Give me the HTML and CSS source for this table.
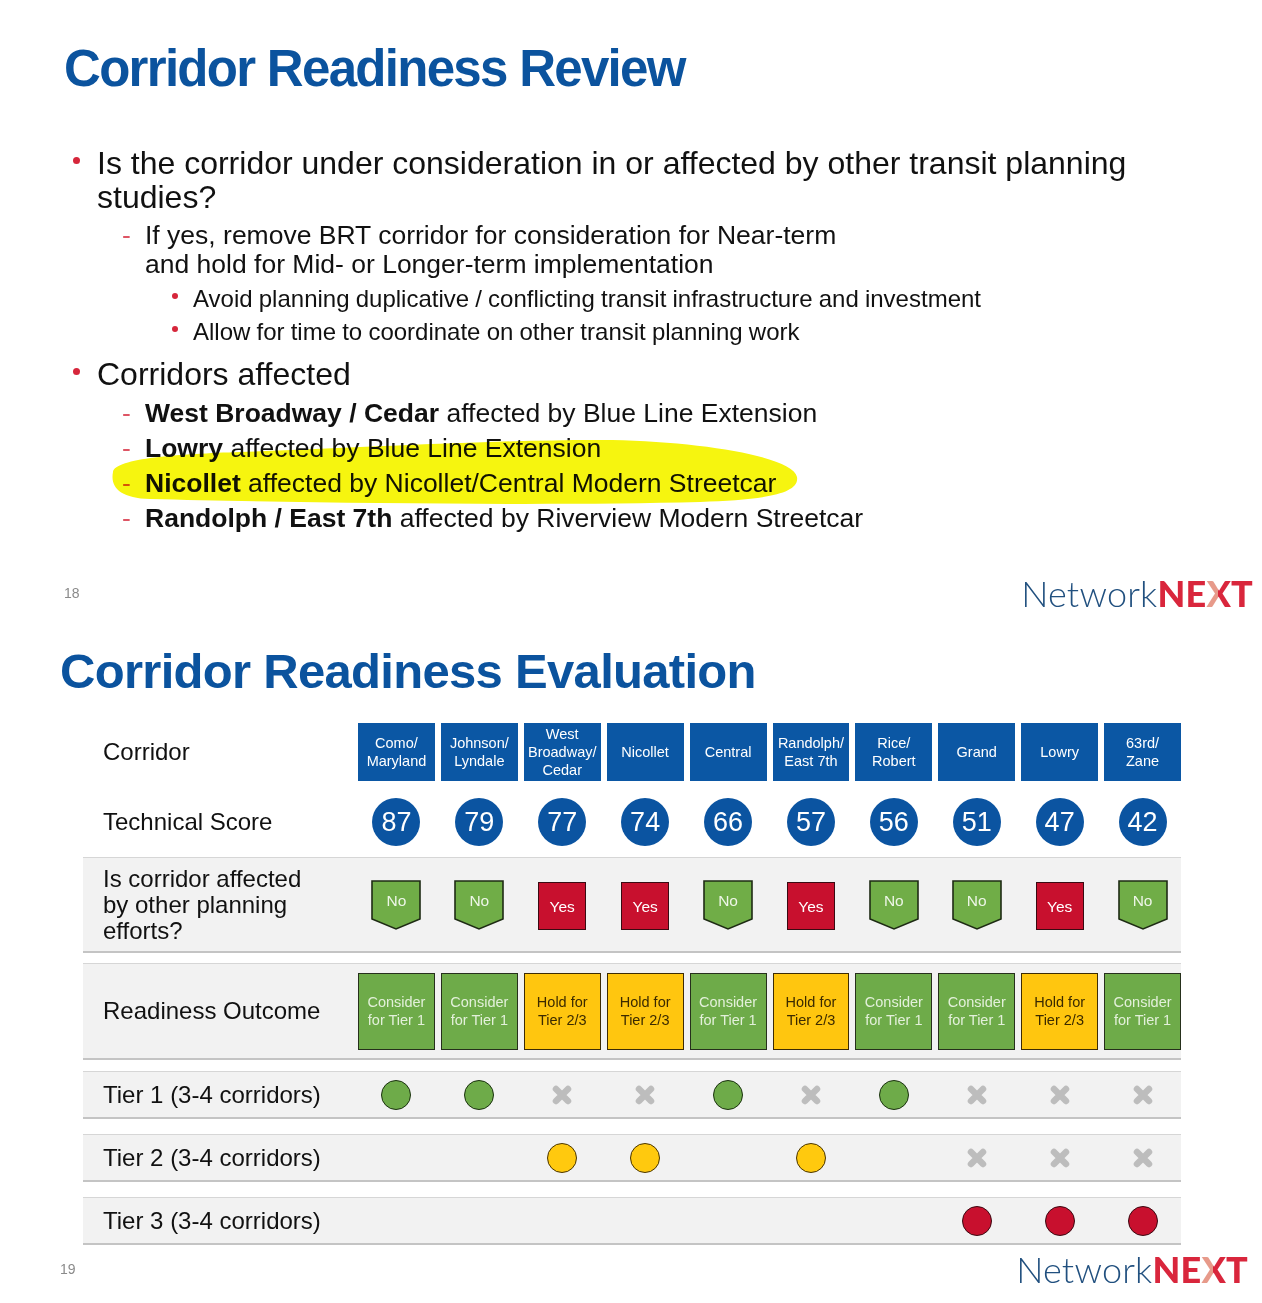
FILE: index.html
```html
<!DOCTYPE html>
<html lang="en">
<head>
<meta charset="utf-8">
<title>Corridor Readiness</title>
<link rel="stylesheet" href="styles.css">
</head>
<body>
<section class="slide slide-review">
  <h1 class="title title-review">Corridor Readiness Review</h1>
  <div class="points">
    <div class="p1">Is the corridor under consideration in or affected by other transit planning<br>studies?</div>
    <div class="p2 first">If yes, remove BRT corridor for consideration for Near-term<br>and hold for Mid- or Longer-term implementation</div>
    <div class="p3 first">Avoid planning duplicative / conflicting transit infrastructure and investment</div>
    <div class="p3">Allow for time to coordinate on other transit planning work</div>
    <div class="p1 p1b">Corridors affected</div>
    <div class="p2 p2a first"><b>West Broadway / Cedar</b> affected by Blue Line Extension</div>
    <div class="p2 p2a"><b>Lowry</b> affected by Blue Line Extension</div>
    <div class="p2 p2a"><b>Nicollet</b> affected by Nicollet/Central Modern Streetcar</div>
    <div class="p2 p2a"><b>Randolph / East 7th</b> affected by Riverview Modern Streetcar</div>
  </div>
  <svg class="highlight" viewBox="100 430 710 85" aria-hidden="true">
    <path d="M113 472 C115 458 180 454 240 452 C400 446 520 439 612 440 C705 442 793 457 797 477 C800 495 760 500 700 502 C550 506 300 503 150 499 C120 498 110 487 113 472 Z" fill="#f6f50f"/>
  </svg>
  <footer class="foot foot-review">
    <span class="pagenum">18</span>
    <span class="logo"><span class="nw">Network</span><span class="nx">NE<span class="x">X</span>T</span></span>
  </footer>
</section>

<section class="slide slide-eval">
  <h1 class="title title-eval">Corridor Readiness Evaluation</h1>
  <div class="matrix">
    <div class="mrow hdr">
      <div class="lbl">Corridor</div>
      <div class="hcell">Como/<br>Maryland</div>
      <div class="hcell">Johnson/<br>Lyndale</div>
      <div class="hcell">West<br>Broadway/<br>Cedar</div>
      <div class="hcell">Nicollet</div>
      <div class="hcell">Central</div>
      <div class="hcell">Randolph/<br>East 7th</div>
      <div class="hcell">Rice/<br>Robert</div>
      <div class="hcell">Grand</div>
      <div class="hcell">Lowry</div>
      <div class="hcell">63rd/<br>Zane</div>
    </div>
    <div class="mrow score">
      <div class="lbl">Technical Score</div>
      <div class="cell"><span class="sc">87</span></div>
      <div class="cell"><span class="sc">79</span></div>
      <div class="cell"><span class="sc">77</span></div>
      <div class="cell"><span class="sc">74</span></div>
      <div class="cell"><span class="sc">66</span></div>
      <div class="cell"><span class="sc">57</span></div>
      <div class="cell"><span class="sc">56</span></div>
      <div class="cell"><span class="sc">51</span></div>
      <div class="cell"><span class="sc">47</span></div>
      <div class="cell"><span class="sc">42</span></div>
    </div>
    <div class="mrow band affect">
      <div class="lbl">Is corridor affected<br>by other planning<br>efforts?</div>
      <div class="cell"><div class="flag no"><svg viewBox="0 0 50 50"><polygon points="1,1 49,1 49,39 25,49 1,39"/></svg><span>No</span></div></div>
      <div class="cell"><div class="flag no"><svg viewBox="0 0 50 50"><polygon points="1,1 49,1 49,39 25,49 1,39"/></svg><span>No</span></div></div>
      <div class="cell"><div class="flag yes"><span>Yes</span></div></div>
      <div class="cell"><div class="flag yes"><span>Yes</span></div></div>
      <div class="cell"><div class="flag no"><svg viewBox="0 0 50 50"><polygon points="1,1 49,1 49,39 25,49 1,39"/></svg><span>No</span></div></div>
      <div class="cell"><div class="flag yes"><span>Yes</span></div></div>
      <div class="cell"><div class="flag no"><svg viewBox="0 0 50 50"><polygon points="1,1 49,1 49,39 25,49 1,39"/></svg><span>No</span></div></div>
      <div class="cell"><div class="flag no"><svg viewBox="0 0 50 50"><polygon points="1,1 49,1 49,39 25,49 1,39"/></svg><span>No</span></div></div>
      <div class="cell"><div class="flag yes"><span>Yes</span></div></div>
      <div class="cell"><div class="flag no"><svg viewBox="0 0 50 50"><polygon points="1,1 49,1 49,39 25,49 1,39"/></svg><span>No</span></div></div>
    </div>
    <div class="mrow band outcome">
      <div class="lbl">Readiness Outcome</div>
      <div class="ocell go">Consider<br>for Tier 1</div>
      <div class="ocell go">Consider<br>for Tier 1</div>
      <div class="ocell hold">Hold for<br>Tier 2/3</div>
      <div class="ocell hold">Hold for<br>Tier 2/3</div>
      <div class="ocell go">Consider<br>for Tier 1</div>
      <div class="ocell hold">Hold for<br>Tier 2/3</div>
      <div class="ocell go">Consider<br>for Tier 1</div>
      <div class="ocell go">Consider<br>for Tier 1</div>
      <div class="ocell hold">Hold for<br>Tier 2/3</div>
      <div class="ocell go">Consider<br>for Tier 1</div>
    </div>
    <div class="mrow band tier">
      <div class="lbl">Tier 1 (3-4 corridors)</div>
      <div class="cell"><span class="dot green"></span></div>
      <div class="cell"><span class="dot green"></span></div>
      <div class="cell"><svg class="xm" viewBox="0 0 22 22"><path d="M5 5 L17 17 M17 5 L5 17"/></svg></div>
      <div class="cell"><svg class="xm" viewBox="0 0 22 22"><path d="M5 5 L17 17 M17 5 L5 17"/></svg></div>
      <div class="cell"><span class="dot green"></span></div>
      <div class="cell"><svg class="xm" viewBox="0 0 22 22"><path d="M5 5 L17 17 M17 5 L5 17"/></svg></div>
      <div class="cell"><span class="dot green"></span></div>
      <div class="cell"><svg class="xm" viewBox="0 0 22 22"><path d="M5 5 L17 17 M17 5 L5 17"/></svg></div>
      <div class="cell"><svg class="xm" viewBox="0 0 22 22"><path d="M5 5 L17 17 M17 5 L5 17"/></svg></div>
      <div class="cell"><svg class="xm" viewBox="0 0 22 22"><path d="M5 5 L17 17 M17 5 L5 17"/></svg></div>
    </div>
    <div class="mrow band tier">
      <div class="lbl">Tier 2 (3-4 corridors)</div>
      <div class="cell"></div>
      <div class="cell"></div>
      <div class="cell"><span class="dot yellow"></span></div>
      <div class="cell"><span class="dot yellow"></span></div>
      <div class="cell"></div>
      <div class="cell"><span class="dot yellow"></span></div>
      <div class="cell"></div>
      <div class="cell"><svg class="xm" viewBox="0 0 22 22"><path d="M5 5 L17 17 M17 5 L5 17"/></svg></div>
      <div class="cell"><svg class="xm" viewBox="0 0 22 22"><path d="M5 5 L17 17 M17 5 L5 17"/></svg></div>
      <div class="cell"><svg class="xm" viewBox="0 0 22 22"><path d="M5 5 L17 17 M17 5 L5 17"/></svg></div>
    </div>
    <div class="mrow band tier">
      <div class="lbl">Tier 3 (3-4 corridors)</div>
      <div class="cell"></div>
      <div class="cell"></div>
      <div class="cell"></div>
      <div class="cell"></div>
      <div class="cell"></div>
      <div class="cell"></div>
      <div class="cell"></div>
      <div class="cell"><span class="dot red"></span></div>
      <div class="cell"><span class="dot red"></span></div>
      <div class="cell"><span class="dot red"></span></div>
    </div>
  </div>
  <footer class="foot foot-eval">
    <span class="pagenum">19</span>
    <span class="logo"><span class="nw">Network</span><span class="nx">NE<span class="x">X</span>T</span></span>
  </footer>
</section>
</body>
</html>
```

FILE: styles.css
```css
* { box-sizing: border-box; }
html, body { margin: 0; padding: 0; background: #fff; }
body {
  width: 1262px;
  font-family: "Liberation Sans", Arial, sans-serif;
  color: #111;
}

.slide { position: relative; }
.slide-review { padding-top: 39px; }

.title {
  margin: 0;
  font-weight: 700;
  color: #0b539e;
  line-height: 60px;
  white-space: nowrap;
}
.title-review { font-size: 51px; letter-spacing: -1.7px; margin-left: 64px; }
.title-eval { font-size: 49px; letter-spacing: -0.7px; margin-left: 60px; margin-top: 28px; }

.points { margin-top: 47px; position: relative; z-index: 1; }
.points div { white-space: nowrap; }

.p1 { font-size: 32px; line-height: 34px; padding-left: 97px; }
.p1::before {
  content: "";
  display: inline-block;
  width: 7px; height: 7px;
  border-radius: 50%;
  background: #d6263b;
  margin-left: -24px;
  margin-right: 17px;
  vertical-align: 0.3em;
}
.p1b { line-height: 40px; margin-top: 6.5px; }

.p2 { font-size: 26.5px; line-height: 29px; padding-left: 145px; }
.p2.first { margin-top: 6.5px; }
.p2::before {
  content: "-";
  display: inline-block;
  width: 23px;
  margin-left: -23px;
  color: #de5564;
}
.p2a { line-height: 35px; }
.p2a.first { margin-top: 1.5px; }

.p3 { font-size: 24px; line-height: 33px; padding-left: 193px; word-spacing: -0.5px; }
.p3.first { margin-top: 3px; }
.p3::before {
  content: "";
  display: inline-block;
  width: 6px; height: 6px;
  border-radius: 50%;
  background: #d6263b;
  margin-left: -21px;
  margin-right: 15px;
  vertical-align: 0.3em;
}

.highlight {
  position: absolute;
  left: 100px; top: 430px;
  width: 710px; height: 85px;
  z-index: 2;
  mix-blend-mode: multiply;
  pointer-events: none;
}

.foot {
  display: flex;
  justify-content: space-between;
  align-items: center;
  height: 40px;
}
.foot-review { margin-top: 37.5px; padding: 0 9px 0 64px; }
.foot-eval { margin-top: 4px; padding: 0 14px 0 60px; }
.pagenum { font-size: 14px; color: #8a8a8a; }
.logo {
  font-family: Lato, "Noto Sans", sans-serif;
  font-size: 36px;
  line-height: 1;
  white-space: nowrap;
  letter-spacing: 0.2px;
}
.logo .nw { color: #21507f; font-weight: 300; }
.logo .nx { color: #d9263c; font-weight: 900; }
.logo .x {
  background: linear-gradient(90deg, #e79a8a 0 48%, #d9263c 48% 100%);
  -webkit-background-clip: text;
  background-clip: text;
  color: transparent;
}

/* matrix */
.matrix { margin-top: 22px; }
.mrow {
  display: grid;
  grid-template-columns: 269px repeat(10, 1fr);
  column-gap: 6px;
  width: 1098px;
  margin-left: 83px;
  align-items: center;
}
.lbl { padding-left: 20px; font-size: 24px; line-height: 26px; color: #111; }
.cell { display: flex; justify-content: center; align-items: center; }

.hdr { height: 58px; align-items: stretch; }
.hcell {
  background: #0b57a4;
  color: #fff;
  font-size: 14.5px;
  line-height: 18px;
  display: flex;
  align-items: center;
  justify-content: center;
  text-align: center;
}
.hdr .lbl { align-self: center; }

.score { height: 48px; margin-top: 17px; }
.sc {
  width: 48px; height: 48px;
  border-radius: 50%;
  background: #0b54a1;
  color: #fff;
  font-size: 27px;
  display: flex;
  align-items: center;
  justify-content: center;
}

.band {
  background: #f2f2f2;
  border-top: 1px solid #d6d6d6;
  border-bottom: 2px solid #c4c4c4;
}
.affect { height: 96px; margin-top: 11px; }
.outcome { height: 97px; margin-top: 10px; }
.tier { height: 48px; margin-top: 15px; }
.outcome + .tier { margin-top: 11px; }

.flag {
  width: 50px; height: 50px;
  display: grid;
  justify-items: center;
  font-size: 15.5px;
  color: #fff;
}
.flag > * { grid-area: 1 / 1; }
.flag svg { width: 50px; height: 50px; display: block; }
.flag polygon { fill: #70ad47; stroke: #1e2b14; stroke-width: 1.6; }
.flag.no span { align-self: start; margin-top: 12px; color: #eef6e8; }
.flag.yes {
  width: 48px; height: 48px;
  background: #c8102e;
  border: 1.6px solid #3a0a12;
  align-items: center;
  margin-top: 2px;
}
.flag.yes span { padding-top: 3px; }

.ocell {
  height: 77px;
  border: 1.6px solid #26301c;
  display: flex;
  align-items: center;
  justify-content: center;
  text-align: center;
  font-size: 14.5px;
  line-height: 18px;
}
.ocell.go { background: #6eab49; color: #e3f0da; }
.ocell.hold { background: #ffc60f; color: #3b2a00; border-color: #3d2b04; }

.dot {
  width: 30px; height: 30px;
  border-radius: 50%;
  border: 1.6px solid #222;
  display: block;
}
.dot.green { background: #6eab49; border-color: #1b3210; }
.dot.yellow { background: #ffc90e; border-color: #4a3500; }
.dot.red { background: #c8102e; border-color: #3a0a12; }

.xm { width: 22px; height: 22px; display: block; }
.xm path { stroke: #bdbdbd; stroke-width: 6.5; stroke-linecap: round; fill: none; }
```
